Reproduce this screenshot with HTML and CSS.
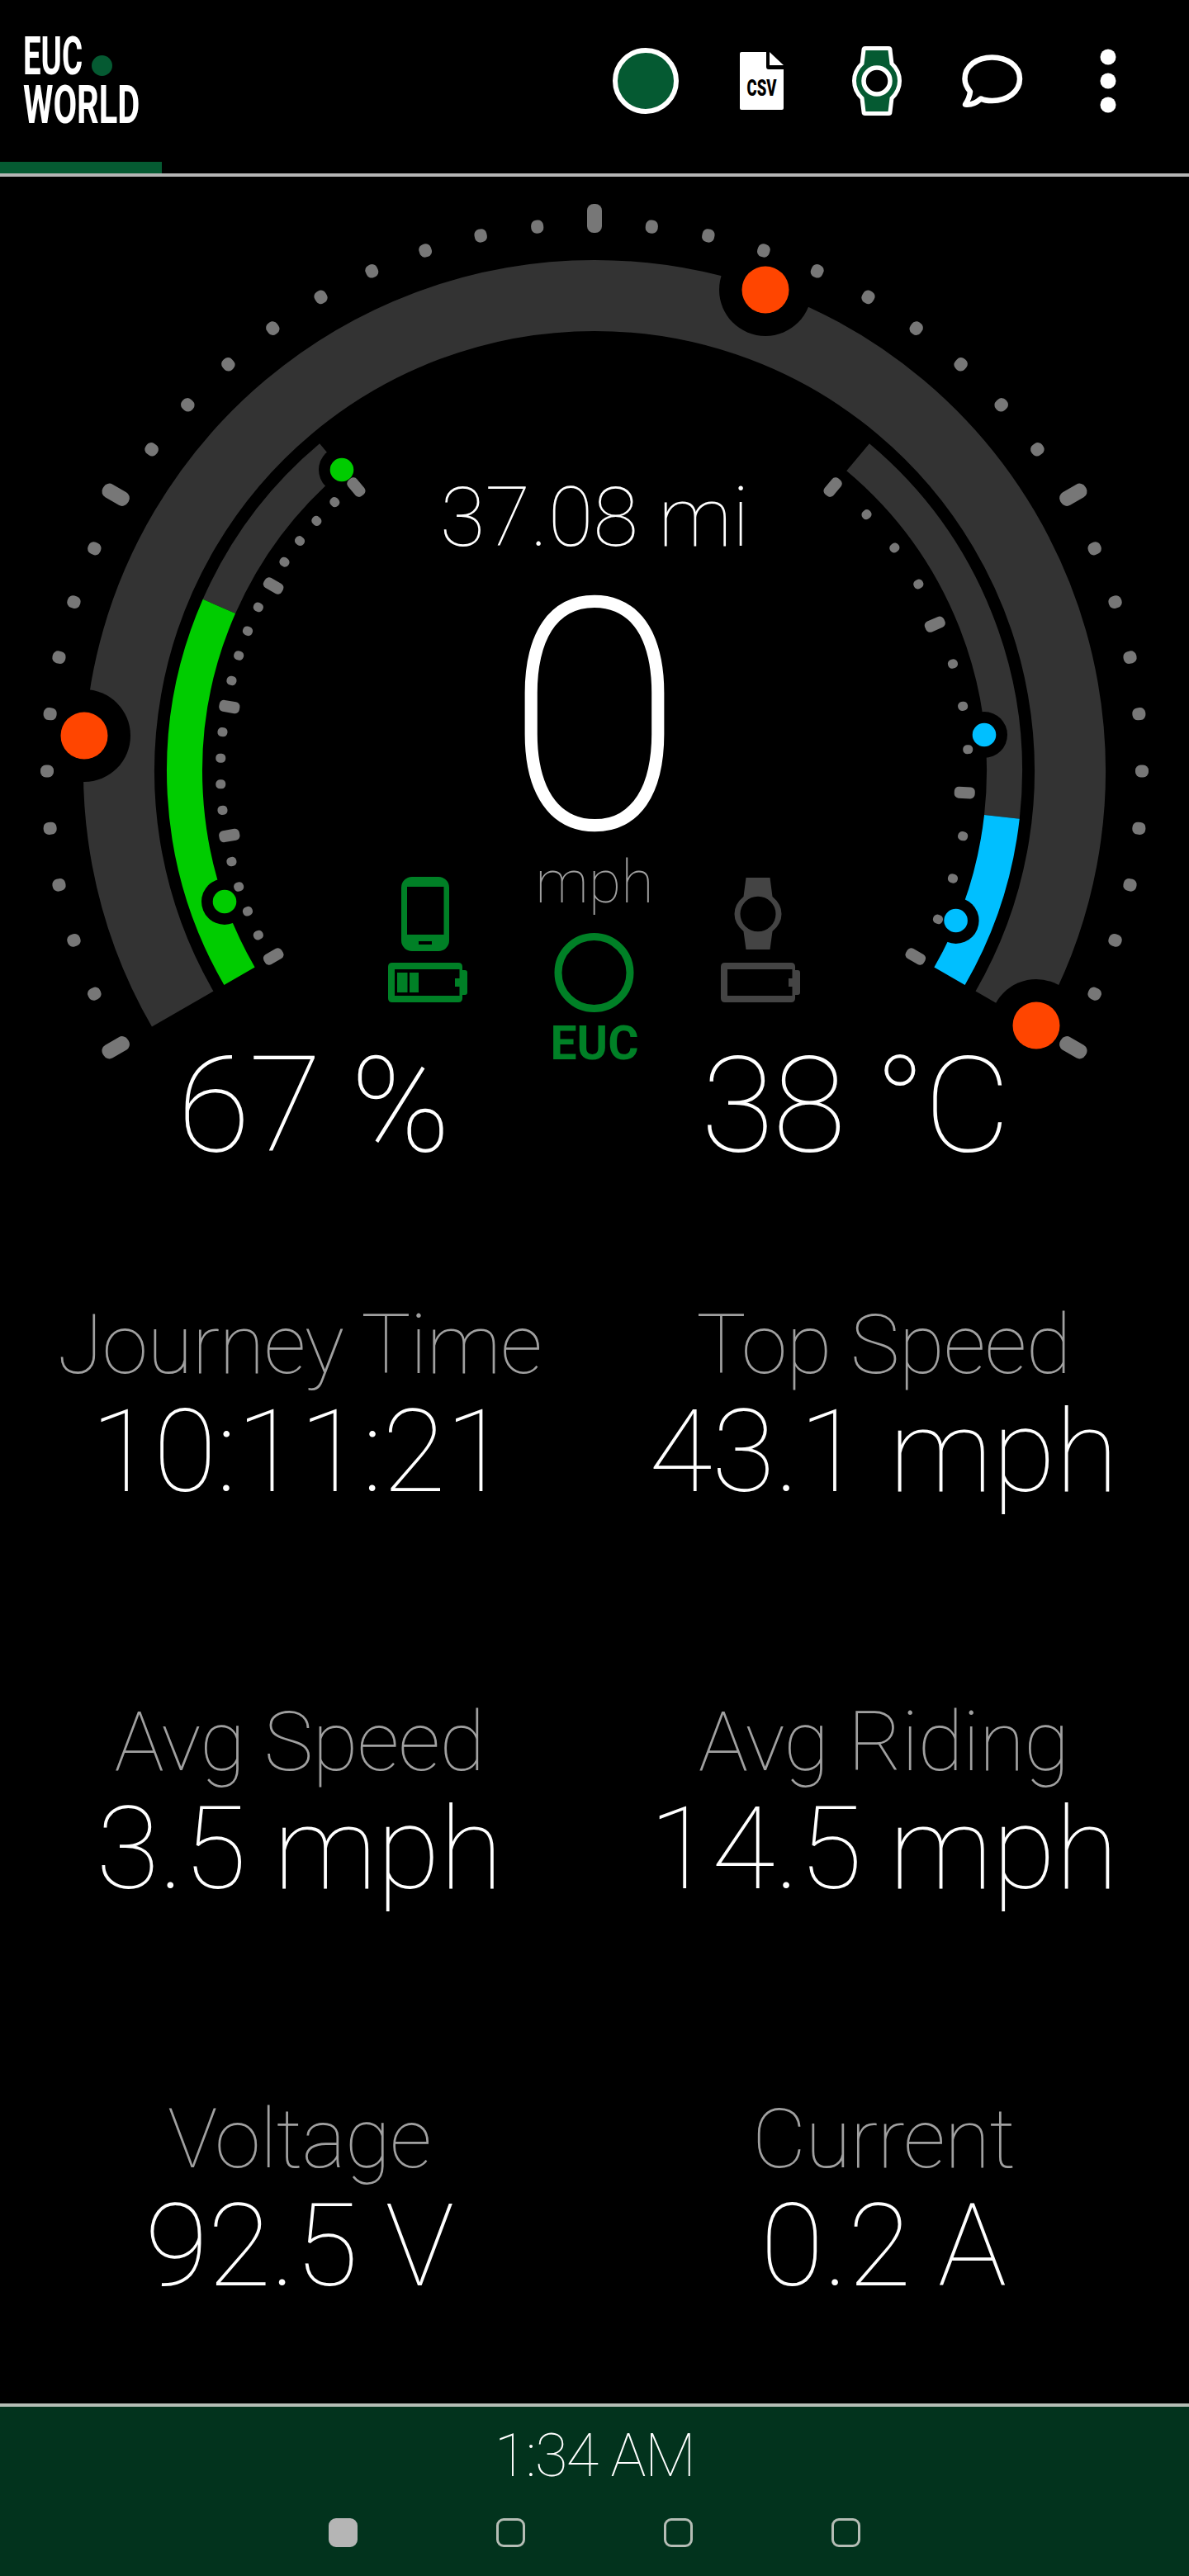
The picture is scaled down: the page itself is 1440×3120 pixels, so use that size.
FILE: index.html
```html
<!DOCTYPE html>
<html lang="en">
<head>
    <meta charset="UTF-8">
    <meta name="viewport" content="width=device-width, initial-scale=1.0">
    <title>EUC World</title>
    <link rel="stylesheet" href="styles.css">
</head>
<body>
    <header class="top-bar">
        <div class="top-row">
            <div class="logo">
                <span class="logo-line logo-euc">EUC</span>
                <span class="logo-dot"></span>
                <span class="logo-line logo-world">WORLD</span>
            </div>
            <nav class="actions">
                <div class="action">
                    <svg width="80" height="80" viewBox="0 0 80 80"><circle cx="40" cy="40" r="37" fill="#055a32" stroke="#fff" stroke-width="6"/></svg>
                </div>
                <div class="action">
                    <svg width="53" height="70" viewBox="895 63 53 70">
                        <path d="M897 63H927V81Q927 84 930 84H948V131Q948 133 946 133H897Q895 133 895 131V65Q895 63 897 63Z" fill="#fff"/>
                        <path d="M931 63L948 79H931Z" fill="#fff"/>
                        <text x="903.5" y="116" class="csv-text" textLength="36" lengthAdjust="spacingAndGlyphs">CSV</text>
                    </svg>
                </div>
                <div class="action">
                    <svg width="60" height="84" viewBox="1032 56 60 84">
                        <path d="M1048 58.500H1076Q1078 58.500 1078 60.500L1080 77Q1089.500 86 1089.500 98Q1089.500 110 1080 119L1078 135.500Q1078 137.500 1076 137.500H1048Q1046 137.500 1046 135.500L1044 119Q1034.500 110 1034.500 98Q1034.500 86 1044 77L1046 60.500Q1046 58.500 1048 58.500Z" fill="#055a32" stroke="#fff" stroke-width="5"/>
                        <circle cx="1062" cy="98" r="16" fill="#000" stroke="#fff" stroke-width="5.500"/>
                    </svg>
                </div>
                <div class="action">
                    <svg width="74" height="66" viewBox="1165 65 74 66">
                        <path d="M1175 111C1170 105 1168.500 100 1168.500 95.500C1168.500 80 1183 69.500 1201.500 69.500C1220 69.500 1235 80 1235 95.500C1235 111 1220 122 1201.500 122C1196.500 122 1192 121.500 1188 119.500C1183 124 1176 127.500 1169 126.500C1172 122 1174.500 116 1175 111Z" fill="none" stroke="#fff" stroke-width="6.500" stroke-linejoin="round"/>
                    </svg>
                </div>
                <div class="action">
                    <svg width="20" height="78" viewBox="0 0 20 78"><circle cx="10" cy="10" r="9.500" fill="#fff"/><circle cx="10" cy="39" r="9.500" fill="#fff"/><circle cx="10" cy="68" r="9.500" fill="#fff"/></svg>
                </div>
            </nav>
        </div>
        <div class="progress"><div class="progress-fill"></div></div>
    </header>

    <main>
        <section class="gauge">
            <svg class="gauge-art" viewBox="0 214 1440 1226">
                <defs>
                    <rect id="t1" x="-7.500" y="-671" width="15" height="16" rx="6.500"/>
                    <rect id="t2" x="-9" y="-687" width="18" height="35" rx="8"/>
                    <rect id="t3" x="-5.500" y="-459" width="11" height="12" rx="5"/>
                    <rect id="t4" x="-7" y="-461.500" width="14" height="25" rx="5.500"/>
                </defs>
                <g transform="translate(720 934)">
                    <!-- main arc -->
                    <path class="arc" stroke-width="86" d="M-498.800 288A576 576 0 1 1 498.800 288"/>
                    <!-- battery + temperature arcs -->
                    <path class="arc" stroke-width="43" d="M-454.600 -199.600A496.500 496.500 0 0 1 -319.100 -380.300"/>
                    <path class="arc arc-green" stroke-width="43" d="M-430 248.250A496.500 496.500 0 0 1 -454.600 -199.600"/>
                    <path class="arc" stroke-width="43" d="M319.100 -380.300A496.500 496.500 0 0 1 493.400 55.300"/>
                    <path class="arc arc-blue" stroke-width="43" d="M493.400 55.300A496.500 496.500 0 0 1 430 248.250"/>

                    <circle r="56" cx="207" cy="-583"/>
                    <circle r="56" cx="-618" cy="-43"/>
                    <circle r="56" cx="535" cy="308"/>
                    <circle r="28" cx="-306" cy="-365"/>
                    <circle r="28" cx="-448" cy="158"/>
                    <circle r="28" cx="472" cy="-44"/>
                    <circle r="28" cx="437.600" cy="181"/>

                    <g class="ticks">
                        <use href="#t2" transform="rotate(-120)"/><use href="#t1" transform="rotate(-114)"/><use href="#t1" transform="rotate(-108)"/><use href="#t1" transform="rotate(-102)"/><use href="#t1" transform="rotate(-96)"/><use href="#t1" transform="rotate(-90)"/><use href="#t1" transform="rotate(-84)"/><use href="#t1" transform="rotate(-78)"/><use href="#t1" transform="rotate(-72)"/><use href="#t1" transform="rotate(-66)"/>
                        <use href="#t2" transform="rotate(-60)"/><use href="#t1" transform="rotate(-54)"/><use href="#t1" transform="rotate(-48)"/><use href="#t1" transform="rotate(-42)"/><use href="#t1" transform="rotate(-36)"/><use href="#t1" transform="rotate(-30)"/><use href="#t1" transform="rotate(-24)"/><use href="#t1" transform="rotate(-18)"/><use href="#t1" transform="rotate(-12)"/><use href="#t1" transform="rotate(-6)"/>
                        <use href="#t2"/><use href="#t1" transform="rotate(6)"/><use href="#t1" transform="rotate(12)"/><use href="#t1" transform="rotate(18)"/><use href="#t1" transform="rotate(24)"/><use href="#t1" transform="rotate(30)"/><use href="#t1" transform="rotate(36)"/><use href="#t1" transform="rotate(42)"/><use href="#t1" transform="rotate(48)"/><use href="#t1" transform="rotate(54)"/>
                        <use href="#t2" transform="rotate(60)"/><use href="#t1" transform="rotate(66)"/><use href="#t1" transform="rotate(72)"/><use href="#t1" transform="rotate(78)"/><use href="#t1" transform="rotate(84)"/><use href="#t1" transform="rotate(90)"/><use href="#t1" transform="rotate(96)"/><use href="#t1" transform="rotate(102)"/><use href="#t1" transform="rotate(108)"/><use href="#t1" transform="rotate(114)"/>
                        <use href="#t2" transform="rotate(120)"/>

                        <use href="#t4" transform="rotate(-120)"/><use href="#t3" transform="rotate(-116)"/><use href="#t3" transform="rotate(-112)"/><use href="#t3" transform="rotate(-108)"/><use href="#t3" transform="rotate(-104)"/>
                        <use href="#t4" transform="rotate(-100)"/><use href="#t3" transform="rotate(-96)"/><use href="#t3" transform="rotate(-92)"/><use href="#t3" transform="rotate(-88)"/><use href="#t3" transform="rotate(-84)"/>
                        <use href="#t4" transform="rotate(-80)"/><use href="#t3" transform="rotate(-76)"/><use href="#t3" transform="rotate(-72)"/><use href="#t3" transform="rotate(-68)"/><use href="#t3" transform="rotate(-64)"/>
                        <use href="#t4" transform="rotate(-60)"/><use href="#t3" transform="rotate(-56)"/><use href="#t3" transform="rotate(-52)"/><use href="#t3" transform="rotate(-48)"/><use href="#t3" transform="rotate(-44)"/>
                        <use href="#t4" transform="rotate(-40)"/>

                        <use href="#t4" transform="rotate(40)"/><use href="#t3" transform="rotate(46.670)"/><use href="#t3" transform="rotate(53.330)"/><use href="#t3" transform="rotate(60)"/>
                        <use href="#t4" transform="rotate(66.670)"/><use href="#t3" transform="rotate(73.330)"/><use href="#t3" transform="rotate(80)"/><use href="#t3" transform="rotate(86.670)"/>
                        <use href="#t4" transform="rotate(93.330)"/><use href="#t3" transform="rotate(100)"/><use href="#t3" transform="rotate(106.670)"/><use href="#t3" transform="rotate(113.330)"/>
                        <use href="#t4" transform="rotate(120)"/>
                    </g>

                    <circle class="dot-orange" r="28.500" cx="207" cy="-583"/>
                    <circle class="dot-orange" r="28.500" cx="-618" cy="-43"/>
                    <circle class="dot-orange" r="28.500" cx="535" cy="308"/>
                    <circle class="dot-green" r="14.300" cx="-306" cy="-365"/>
                    <circle class="dot-green" r="14.300" cx="-448" cy="158"/>
                    <circle class="dot-blue" r="14.300" cx="472" cy="-44"/>
                    <circle class="dot-blue" r="14.300" cx="437.600" cy="181"/>
                </g>

                <!-- phone -->
                <g class="status-on">
                    <rect x="486" y="1062" width="58" height="90" rx="13"/>
                    <rect x="493" y="1074" width="44.500" height="58" class="cut"/>
                    <rect x="507" y="1140" width="16" height="4" class="cut"/>
                    <path d="M475 1166H555Q560 1166 560 1171V1175H563Q566 1175 566 1178V1202Q566 1205 563 1205H560V1209Q560 1214 555 1214H475Q470 1214 470 1209V1171Q470 1166 475 1166Z"/>
                    <path d="M478 1174H556.500V1185H551V1195H556.500V1206H478Z" class="cut"/>
                    <rect x="481" y="1178" width="12.500" height="24"/>
                    <rect x="496" y="1178" width="11" height="24"/>
                </g>
                <!-- connection ring -->
                <circle class="ring" cx="719.500" cy="1178" r="43.500"/>
                <text class="euc-label" x="720" y="1283" text-anchor="middle">EUC</text>
                <!-- watch -->
                <g class="status-off">
                    <path fill-rule="evenodd" d="M903.500 1063H932.500L935.500 1086Q946.500 1095 946.500 1107Q946.500 1119 935.500 1128L932.500 1150H903.500L900.500 1128Q889.500 1119 889.500 1107Q889.500 1095 900.500 1086ZM918 1085.700A21.500 21.300 0 1 0 918 1128.300A21.500 21.300 0 1 0 918 1085.700Z"/>
                    <path d="M878 1166H958Q963 1166 963 1171V1175H966Q969 1175 969 1178V1202Q969 1205 966 1205H963V1209Q963 1214 958 1214H878Q873 1214 873 1209V1171Q873 1166 878 1166Z"/>
                    <path d="M881 1174H959.500V1185H955V1195H959.500V1206H881Z" class="cut"/>
                </g>
            </svg>

            <div class="speed-block">
                <div class="distance">37.08 mi</div>
                <div class="speed">0</div>
                <div class="speed-unit">mph</div>
            </div>
            <div class="readouts">
                <div class="readout">67 %</div>
                <div class="readout">38 °C</div>
            </div>
        </section>

        <section class="stats">
            <div class="stat"><div class="stat-label">Journey Time</div><div class="stat-value">10:11:21</div></div>
            <div class="stat"><div class="stat-label">Top Speed</div><div class="stat-value">43.1 mph</div></div>
            <div class="stat"><div class="stat-label">Avg Speed</div><div class="stat-value">3.5 mph</div></div>
            <div class="stat"><div class="stat-label">Avg Riding</div><div class="stat-value">14.5 mph</div></div>
            <div class="stat"><div class="stat-label">Voltage</div><div class="stat-value">92.5 V</div></div>
            <div class="stat"><div class="stat-label">Current</div><div class="stat-value">0.2 A</div></div>
        </section>
    </main>

    <footer class="clock-bar">
        <div class="clock">1:34 AM</div>
        <div class="pager">
            <span class="page-dot active"></span>
            <span class="page-dot"></span>
            <span class="page-dot"></span>
            <span class="page-dot"></span>
        </div>
    </footer>
</body>
</html>
```

FILE: styles.css
```css
body {
    font-family: Roboto, sans-serif;
    margin: 0;
    padding: 0;
    width: 1440px;
    height: 3120px;
    background: #000;
    color: #fff;
    display: flex;
    flex-direction: column;
    overflow: hidden;
}

main {
    flex: 1;
}

/* top bar */
.top-row {
    height: 196px;
    display: flex;
    justify-content: space-between;
    align-items: center;
    padding-right: 28px;
}

.logo {
    position: relative;
    width: 180px;
    height: 104px;
    margin-left: 28px;
    display: flex;
    flex-direction: column;
    gap: 13px;
}

.logo-line {
    display: block;
    height: 46px;
    line-height: 46px;
    font-size: 64px;
    font-weight: 700;
    transform-origin: left center;
    white-space: nowrap;
}

.logo-euc {
    transform: scaleX(0.6);
}

.logo-world {
    transform: scaleX(0.65);
}

.logo-dot {
    position: absolute;
    left: 83px;
    top: 21px;
    width: 25px;
    height: 25px;
    border-radius: 50%;
    background: #055a32;
}

.actions {
    display: flex;
}

.action {
    width: 140px;
    height: 140px;
    display: flex;
    justify-content: center;
    align-items: center;
}

.action svg {
    overflow: visible;
}

.csv-text {
    font-size: 27px;
    font-weight: 900;
    fill: #000;
}

.progress {
    height: 14px;
    border-bottom: 4px solid #b5b5b5;
}

.progress-fill {
    width: 196px;
    height: 14px;
    background: #055a32;
}

/* gauge */
.gauge {
    position: relative;
    height: 1226px;
}

.gauge-art {
    position: absolute;
    left: 0;
    top: 0;
    width: 1440px;
    height: 1226px;
}

.arc {
    fill: none;
    stroke: #333;
}

.arc-green {
    stroke: #00cc00;
}

.arc-blue {
    stroke: #00bfff;
}

.ticks {
    fill: #777;
}

.dot-orange {
    fill: #ff4500;
}

.dot-green {
    fill: #00cc00;
}

.dot-blue {
    fill: #00bfff;
}

.status-on {
    fill: #008026;
}

.status-off {
    fill: #444;
}

.cut {
    fill: #000;
}

.ring {
    fill: none;
    stroke: #008026;
    stroke-width: 9;
}

.euc-label {
    font-size: 57px;
    font-weight: 700;
    fill: #008026;
}

.speed-block {
    position: relative;
    display: flex;
    flex-direction: column;
    align-items: center;
    padding-top: 363px;
}

.distance {
    font-size: 100px;
    line-height: 100px;
    font-weight: 100;
}

.speed {
    font-size: 385px;
    line-height: 300px;
    font-weight: 100;
    -webkit-text-stroke: 5px #fff;
    margin-top: 43px;
}

.speed-unit {
    font-size: 72px;
    line-height: 72px;
    font-weight: 100;
    color: #a0a0a0;
    margin-top: 13px;
}

.readouts {
    position: absolute;
    left: 0;
    top: 1045px;
    display: grid;
    grid-template-columns: 758px 555px;
}

.readout {
    font-size: 162px;
    line-height: 160px;
    font-weight: 100;
    letter-spacing: -2px;
    text-align: center;
}

/* stats */
.stats {
    display: grid;
    grid-template-columns: 725px 690px;
    row-gap: 227px;
    padding-top: 134px;
}

.stat {
    text-align: center;
}

.stat-label {
    font-size: 101px;
    line-height: 110px;
    font-weight: 100;
    letter-spacing: -1px;
    color: #a0a0a0;
}

.stat-value {
    font-size: 140px;
    line-height: 140px;
    font-weight: 100;
    letter-spacing: -0.5px;
    margin-top: 4px;
}

/* bottom clock bar */
.clock-bar {
    height: 209px;
    box-sizing: border-box;
    background: #02331d;
    border-top: 4px solid #b5bdb5;
    display: flex;
    flex-direction: column;
    align-items: center;
}

.clock {
    font-size: 72px;
    line-height: 72px;
    font-weight: 100;
    letter-spacing: -1.5px;
    margin-top: 24px;
}

.pager {
    display: flex;
    gap: 168px;
    margin-top: 39px;
}

.page-dot {
    width: 35px;
    height: 35px;
    box-sizing: border-box;
    border: 3px solid #b5bdb5;
    border-radius: 9px;
}

.page-dot.active {
    background: #b5b5b5;
    border-color: #b5b5b5;
}
```
